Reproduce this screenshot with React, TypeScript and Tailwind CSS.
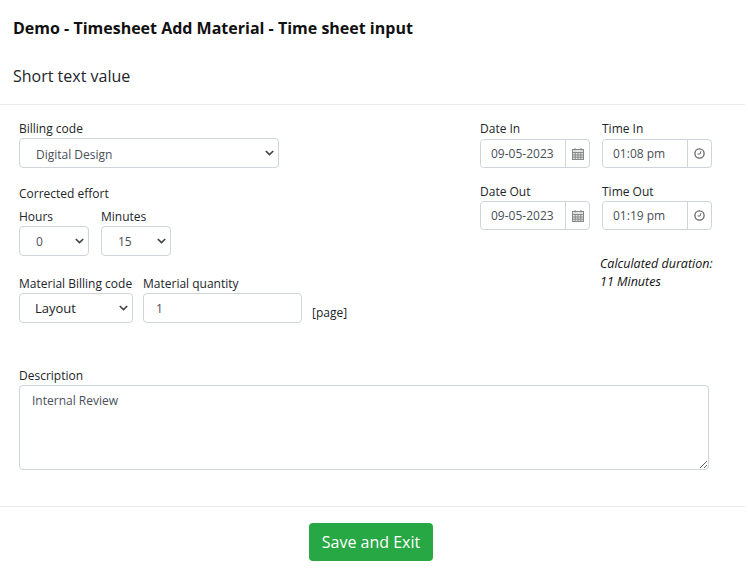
import React from "react";

const Chevron = () => (
  <svg className="pointer-events-none absolute right-[5px] top-1/2 -translate-y-1/2" width="9" height="6" viewBox="0 0 9 6" fill="none">
    <path d="M0.8 1 L4.5 4.6 L8.2 1" stroke="#444" strokeWidth="1.7" />
  </svg>
);

const Select = ({ value, className, text }: { value: string; className: string; text: string }) => (
  <div className={`relative ${className}`}>
    <select
      defaultValue={value}
      className={`h-full w-full appearance-none rounded-[4px] border border-[#ced4da] bg-white outline-none ${text}`}
    >
      <option>{value}</option>
    </select>
    <Chevron />
  </div>
);

const Calendar = () => (
  <svg width="12" height="12" viewBox="0 0 12 12" fill="none" stroke="#888" strokeWidth="1">
    <rect x="0.5" y="1.5" width="11" height="10" fill="#e4e4e4" />
    <path d="M0.5 4.5H11.5M0.5 7H11.5M0.5 9.2H11.5M3.2 4.5V11.5M6 4.5V11.5M8.8 4.5V11.5M3 0V2.5M9 0V2.5" />
  </svg>
);

const Clock = () => (
  <svg width="11" height="11" viewBox="0 0 11 11" fill="none" stroke="#666" strokeWidth="1.3">
    <circle cx="5.5" cy="5.5" r="4.6" />
    <path d="M7 3.2L6 6H3.6" strokeWidth="1" />
  </svg>
);

const Addon = ({ value, kind, label, tight }: { value: string; kind: "date" | "time"; label: string; tight?: boolean }) => (
  <div className="w-[110px]">
    <div className="h-[18px] text-[12px] leading-[18px] text-[#212529]">{label}</div>
    <div className={`flex h-[29px] rounded-[4px] border border-[#ced4da] bg-white ${tight ? "" : "mt-[1px]"}`}>
      <input
        readOnly
        value={value}
        className="w-0 min-w-0 flex-1 rounded-l-[4px] bg-white pl-[10px] pt-[1px] text-[12px] text-[#495057] outline-none"
      />
      <div className="flex w-[24px] items-center justify-center border-l border-[#ced4da]">
        {kind === "date" ? <Calendar /> : <Clock />}
      </div>
    </div>
  </div>
);

const Label = ({ children, className }: { children: React.ReactNode; className?: string }) => (
  <div className={`h-[18px] whitespace-nowrap text-[12px] leading-[18px] text-[#212529] ${className ?? ""}`}>{children}</div>
);

export default function App() {
  return (
    <div className="h-[576px] w-[748px] overflow-hidden bg-white font-['Open_Sans',sans-serif] text-[#212529]">
      <div className="w-[745px]">
        <header className="h-[105px] border-b border-[#e9ecef] pl-[13px] pt-[16px]">
          <h1 className="text-[16px] font-bold leading-[24px] text-[#111]">Demo - Timesheet Add Material - Time sheet input</h1>
          <p className="mt-[24px] text-[16px] leading-[24px]">Short text value</p>
        </header>

        <main className="h-[401px] px-[19px] pt-[15px]">
          <div className="flex h-[255px] justify-between">
            <div className="w-[340px]">
              <Label>Billing code</Label>
              <Select
                value="Digital Design"
                className="h-[30px] w-[260px]"
                text="pl-[16px] pt-[3px] text-[12px] text-[#495057]"
              />

              <Label className="mt-[17px]">Corrected effort</Label>
              <div className="mt-[5px] flex gap-[12px]">
                <div>
                  <Label>Hours</Label>
                  <Select value="0" className="h-[30px] w-[70px]" text="pl-[16px] pt-[2px] text-[12px] text-[#495057]" />
                </div>
                <div>
                  <Label>Minutes</Label>
                  <Select value="15" className="h-[30px] w-[70px]" text="pl-[16px] pt-[2px] text-[12px] text-[#495057]" />
                </div>
              </div>

              <div className="mt-[19px] flex gap-[10px]">
                <div>
                  <Label>Material Billing code</Label>
                  <Select value="Layout" className="h-[30px] w-[114px]" text="pl-[15px] pt-[2px] text-[13px] text-[#222]" />
                </div>
                <div>
                  <Label>Material quantity</Label>
                  <input
                    readOnly
                    value="1"
                    className="block h-[30px] w-[159px] rounded-[4px] border border-[#ced4da] bg-white pl-[12px] text-[12px] text-[#495057] outline-none"
                  />
                </div>
                <div className="self-end pb-[1px] text-[12px] leading-[18px]">[page]</div>
              </div>
            </div>

            <div className="mr-[14px] w-[232px]">
              <div className="flex gap-[12px]">
                <Addon label="Date In" value="09-05-2023" kind="date" />
                <Addon label="Time In" value="01:08 pm" kind="time" />
              </div>
              <div className="mt-[15px] flex gap-[12px]">
                <Addon label="Date Out" value="09-05-2023" kind="date" tight />
                <Addon label="Time Out" value="01:19 pm" kind="time" tight />
              </div>
              <div className="ml-[120px] mt-[25px] whitespace-nowrap text-[12.5px] italic leading-[18px] text-[#111]">
                <div>Calculated duration:</div>
                <div>11 Minutes</div>
              </div>
            </div>
          </div>

          <Label className="mt-[-8px]">Description</Label>
          <textarea
            readOnly
            value="Internal Review"
            className="block h-[85px] w-[690px] rounded-[4px] border border-[#ced4da] bg-white px-[12px] py-[6px] text-[12px] leading-[18px] text-[#495057] outline-none"
          />
        </main>

        <footer className="flex h-[70px] justify-center border-t border-[#e9ecef] pr-[3px] pt-[16px]">
          <button className="h-[38px] w-[124px] rounded-[4px] bg-[#28a745] text-[16px] leading-[24px] text-white">
            Save and Exit
          </button>
        </footer>
      </div>
    </div>
  );
}
